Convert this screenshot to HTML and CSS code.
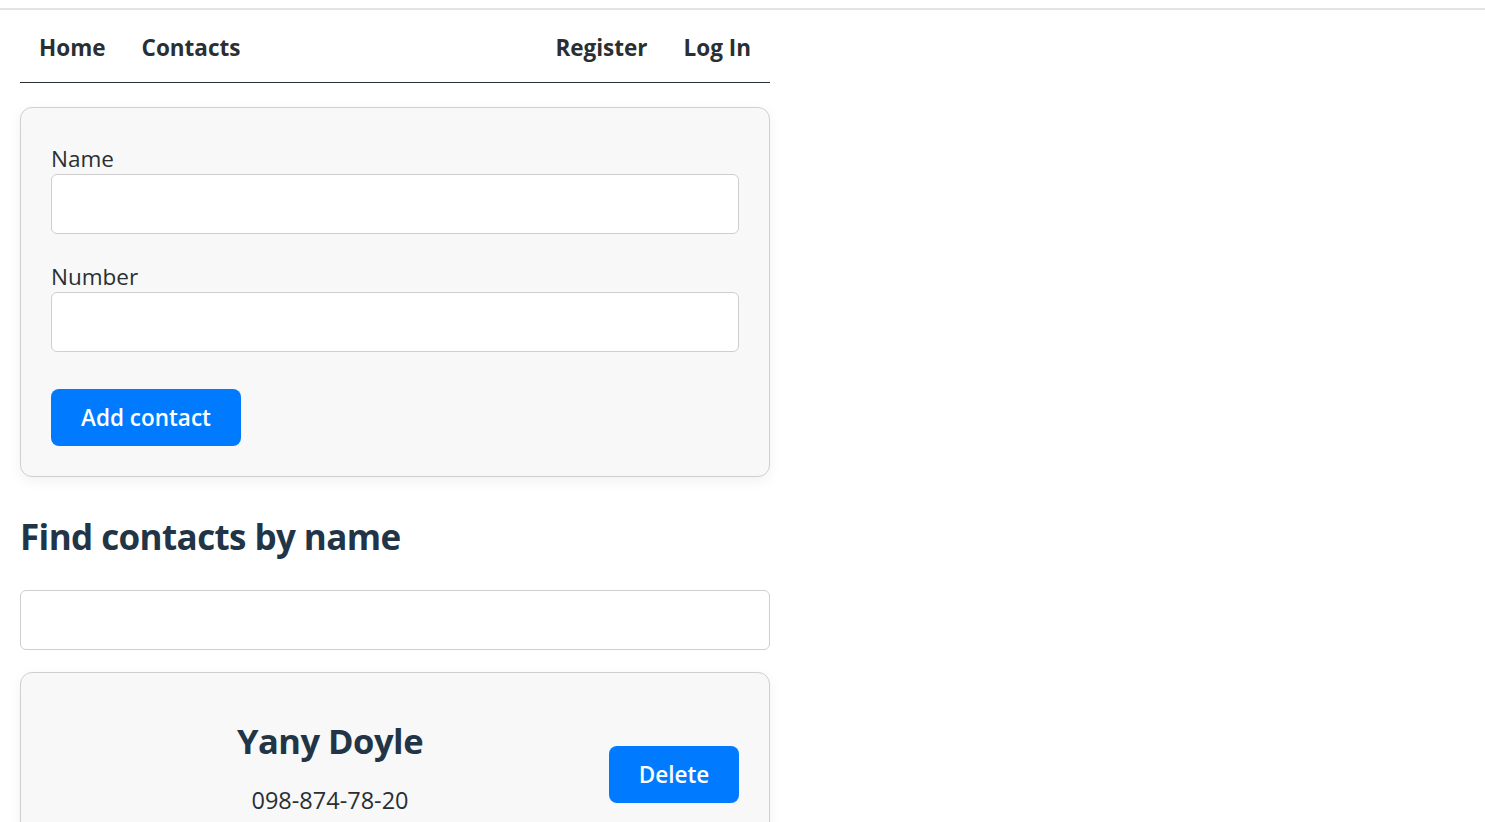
FILE: index.html
```html
<!DOCTYPE html>
<html>
<head>
<meta charset="utf-8">
<link rel="stylesheet" href="styles.css">
</head>
<body>
<div class="topline"></div>
<div class="container">
  <nav class="nav">
    <div class="nav-group">
      <a class="nav-link" href="#">Home</a>
      <a class="nav-link" href="#">Contacts</a>
    </div>
    <div class="nav-group">
      <a class="nav-link" href="#">Register</a>
      <a class="nav-link" href="#">Log In</a>
    </div>
  </nav>
  <form class="card form-card">
    <label class="field">
      <span class="label">Name</span>
      <input class="input" type="text">
    </label>
    <label class="field">
      <span class="label">Number</span>
      <input class="input" type="text">
    </label>
    <button class="btn btn-add" type="button">Add contact</button>
  </form>
  <h2 class="title">Find contacts by name</h2>
  <input class="input search" type="text">
  <div class="card contact-card">
    <div class="contact-info">
      <h3 class="contact-name">Yany Doyle</h3>
      <p class="contact-phone">098-874-78-20</p>
    </div>
    <button class="btn btn-delete" type="button">Delete</button>
  </div>
</div>
</body>
</html>
```
FILE: styles.css
```css
* { box-sizing: border-box; }
html, body { margin: 0; padding: 0; background: #fff; }
body {
  font-family: "Open Sans", "Noto Sans", sans-serif;
  color: #213547;
  overflow: hidden;
}
.topline {
  margin-top: 8px;
  height: 2px;
  background: #e3e3e3;
}
.container {
  width: 750px;
  margin-left: 20px;
}
.nav {
  display: flex;
  justify-content: space-between;
  border-bottom: 1px solid #2a2f33;
  height: 73px;
  padding: 3px 19px 0;
  align-items: center;
}
.nav-group { display: flex; gap: 36px; }
.nav-link {
  font-size: 22.5px;
  font-weight: 700;
  color: #2a2f33;
  text-decoration: none;
  letter-spacing: 0;
}
.card {
  background: #f8f8f8;
  border: 1px solid #cfcfcf;
  border-radius: 12px;
  box-shadow: 0 4px 14px rgba(0,0,0,0.06);
}
.form-card {
  margin-top: 24px;
  padding: 30px 30px 30px;
  display: flex;
  flex-direction: column;
  align-items: flex-start;
}
.field {
  display: flex;
  flex-direction: column;
  width: 100%;
  margin-bottom: 28px;
}
.label {
  font-size: 22.5px;
  line-height: 30px;
  color: #2a2f33;
  margin-top: 6px;
}
.field + .field .label { margin-top: 0; }
.input {
  display: block;
  width: 100%;
  height: 60px;
  border: 1px solid #cfcfcf;
  border-radius: 6px;
  background: #fff;
  font-family: inherit;
  font-size: 20px;
  padding: 0 12px;
  outline: none;
}
.btn {
  border: none;
  background: #007bff;
  color: #fff;
  font-family: inherit;
  font-weight: 600;
  font-size: 22.5px;
  border-radius: 8px;
  height: 57px;
  cursor: pointer;
}
.btn-add {
  width: 190px;
  margin-top: 9px;
}
.title {
  font-size: 35px;
  font-weight: 700;
  margin: 37px 0 30px;
  line-height: 46px;
  letter-spacing: -0.6px;
}
.search { height: 60px; }
.contact-card {
  margin-top: 22px;
  padding: 40px 30px 40px;
  display: flex;
  height: 200px;
  align-items: flex-start;
}
.contact-info {
  flex: 1;
  text-align: center;
}
.contact-name {
  margin: 0;
  font-size: 34.5px;
  font-weight: 700;
  line-height: 56px;
  letter-spacing: -0.5px;
}
.contact-phone {
  margin: 15px 0 0;
  font-size: 23.5px;
  color: #2a2f33;
}
.btn-delete {
  width: 130px;
  margin-top: 33px;
}
```
